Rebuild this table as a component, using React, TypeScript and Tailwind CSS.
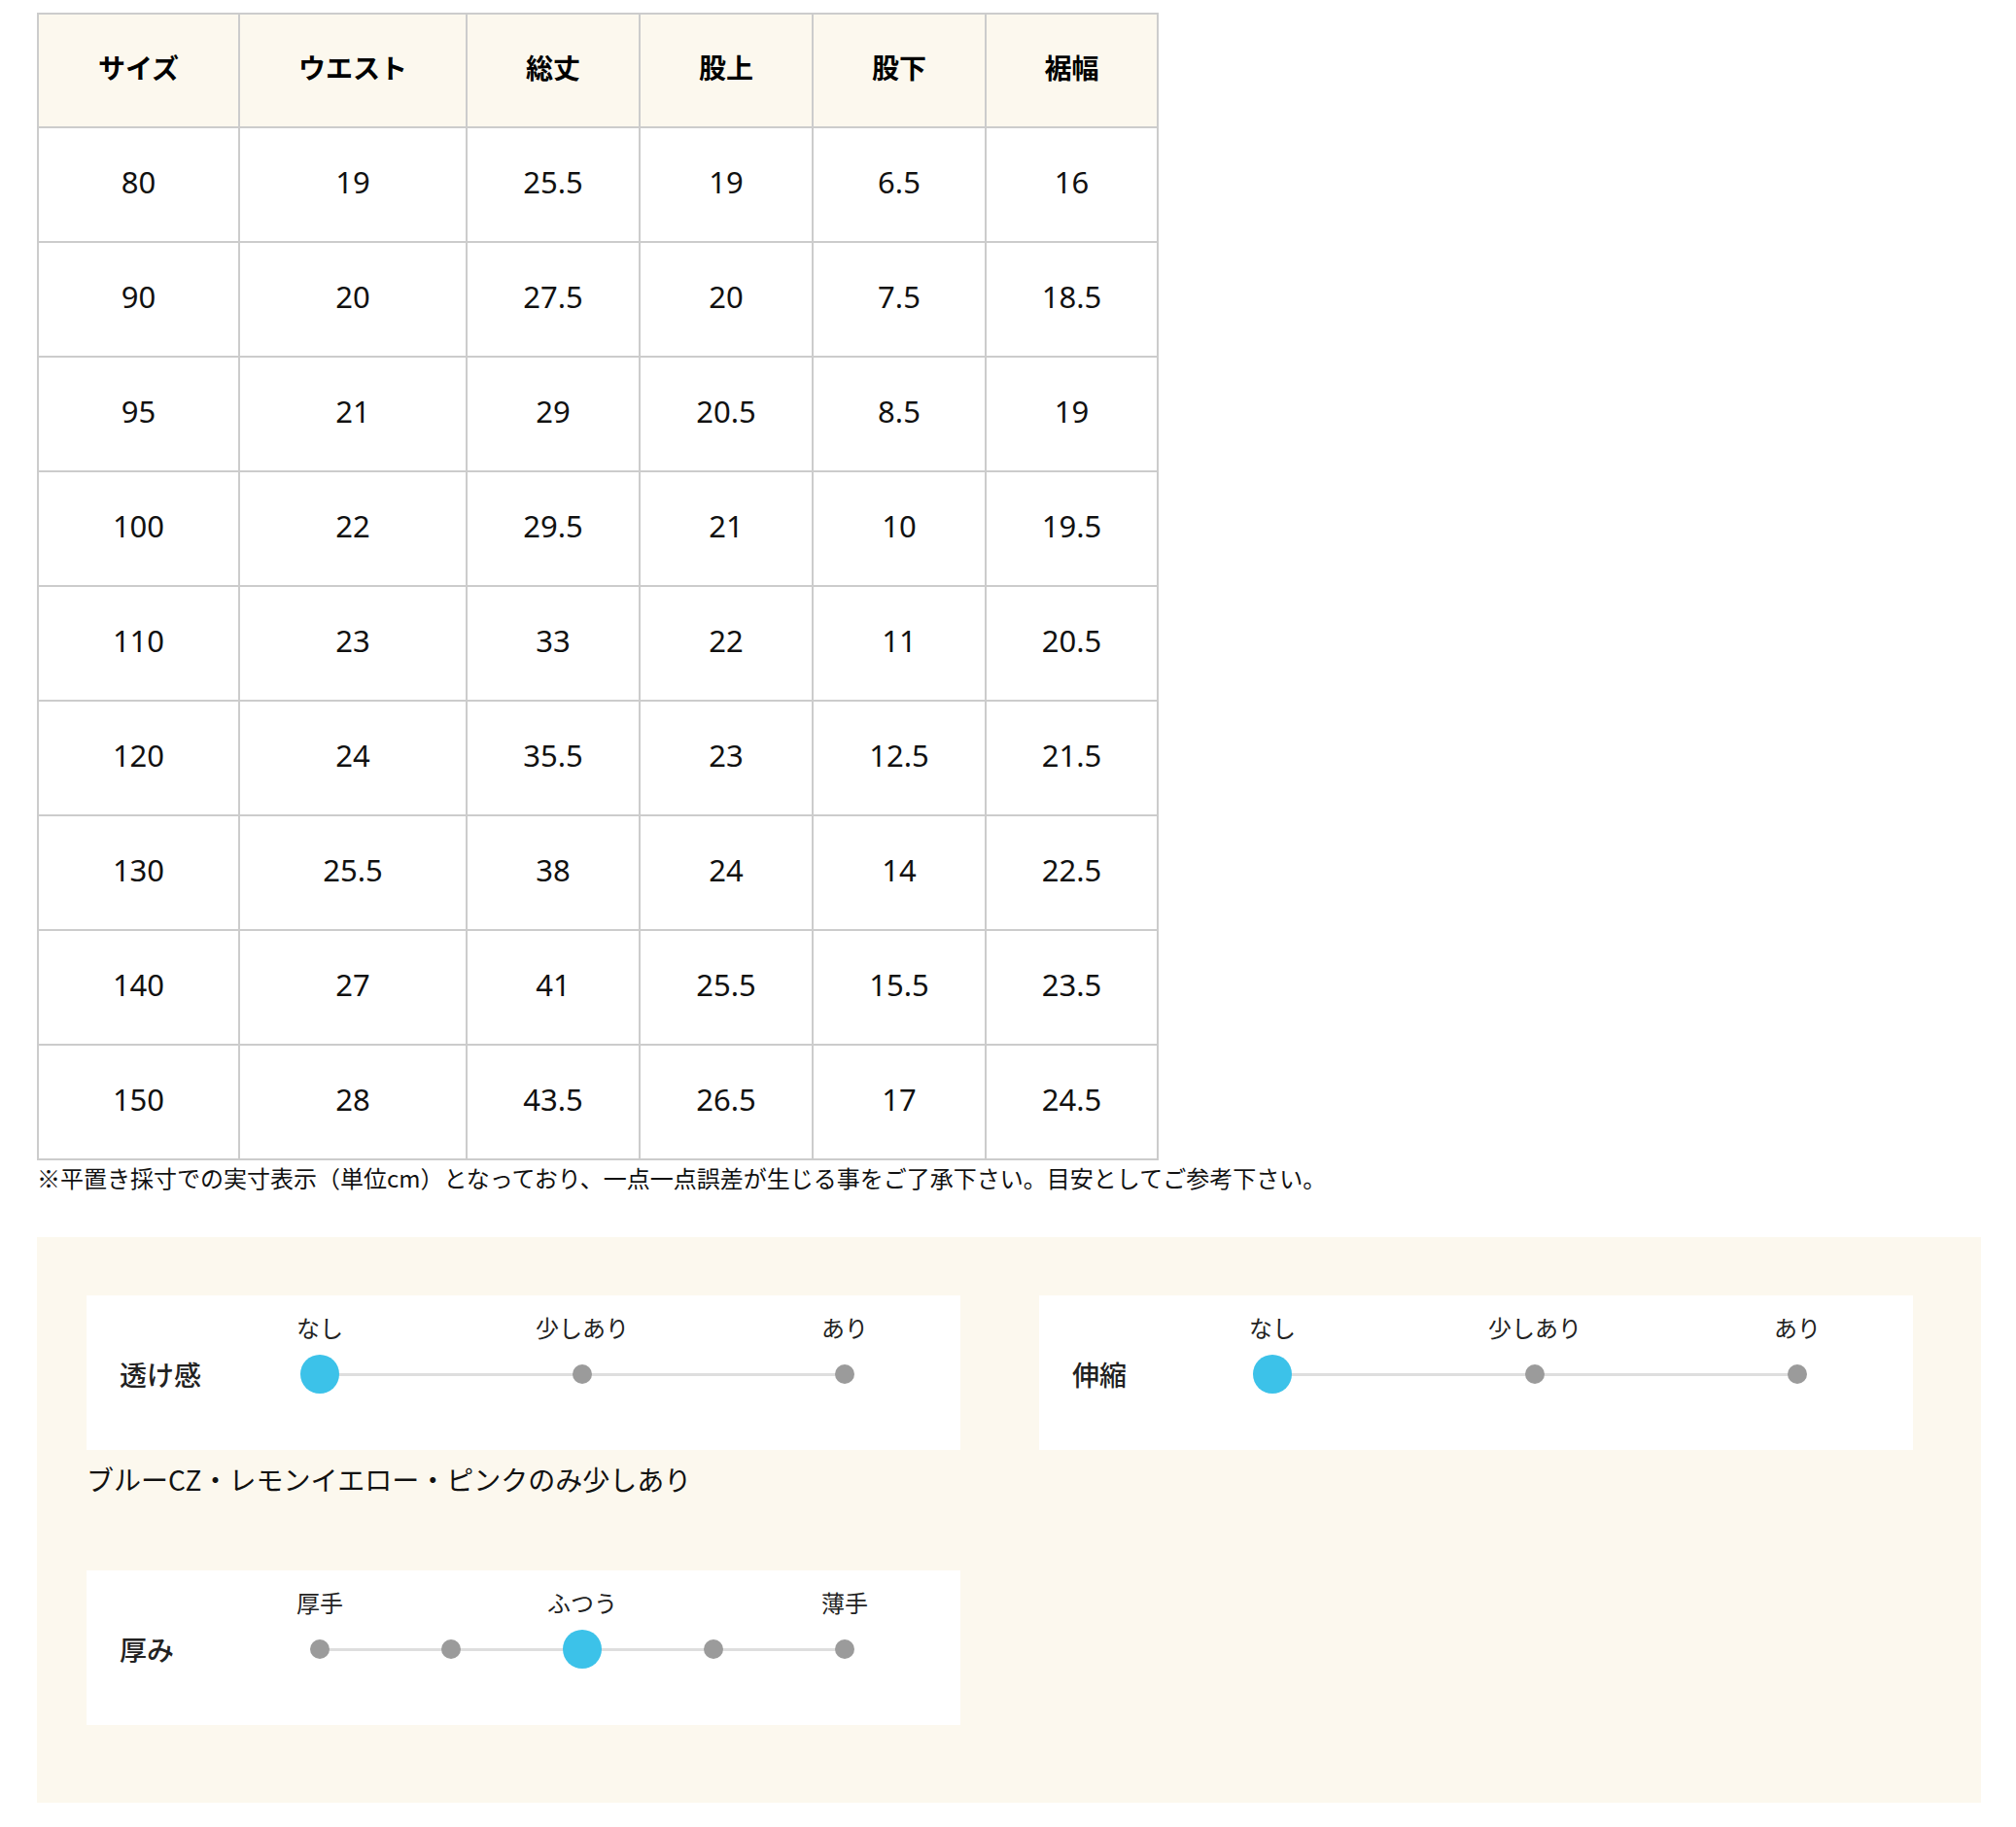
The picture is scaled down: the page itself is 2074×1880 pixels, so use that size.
import React from "react";

const headers = ["サイズ", "ウエスト", "総丈", "股上", "股下", "裾幅"];
const rows = [
  ["80", "19", "25.5", "19", "6.5", "16"],
  ["90", "20", "27.5", "20", "7.5", "18.5"],
  ["95", "21", "29", "20.5", "8.5", "19"],
  ["100", "22", "29.5", "21", "10", "19.5"],
  ["110", "23", "33", "22", "11", "20.5"],
  ["120", "24", "35.5", "23", "12.5", "21.5"],
  ["130", "25.5", "38", "24", "14", "22.5"],
  ["140", "27", "41", "25.5", "15.5", "23.5"],
  ["150", "28", "43.5", "26.5", "17", "24.5"],
];
const widths = ["w-[207px]", "w-[234px]", "w-[178px]", "w-[178px]", "w-[178px]", "w-[177px]"];

const jp = "font-['Noto_Sans_CJK_JP','Noto_Sans',sans-serif]";
const num = "font-['Noto_Sans','Noto_Sans_CJK_JP',sans-serif]";

function Scale({
  label,
  ticks,
  dots,
  active,
}: {
  label: string;
  ticks: string[];
  dots: number;
  active: number;
}) {
  return (
    <div className="w-[899px] h-[159px] bg-white pt-[18px]">
      <div className="pl-[220px]">
        <div className="w-[580px] h-[30px] flex justify-between">
          {ticks.map((t) => (
            <div key={t} className="w-[40px] flex justify-center">
              <span className={`${jp} whitespace-nowrap text-[24px] leading-[30px] text-[#222]`}>{t}</span>
            </div>
          ))}
        </div>
      </div>
      <div className="mt-[13px] flex items-center h-[40px]">
        <div className={`${jp} w-[220px] pl-[34px] text-[28px] font-medium text-[#222] leading-[40px]`}>{label}</div>
        <div className="relative w-[580px] h-[40px] flex justify-between items-center">
          <div className="absolute left-[20px] right-[20px] top-[19px] h-[3px] bg-[#dedede]" />
          {Array.from({ length: dots }).map((_, i) => (
            <div key={i} className="relative w-[40px] h-[40px] flex items-center justify-center">
              {i === active ? (
                <div className="w-[40px] h-[40px] rounded-full bg-[#3cc2e9]" />
              ) : (
                <div className="w-[20px] h-[20px] rounded-full bg-[#9b9b9b]" />
              )}
            </div>
          ))}
        </div>
      </div>
    </div>
  );
}

export default function App() {
  return (
    <div className="bg-white w-[2074px] min-h-[1880px] pl-[38px] pt-[13px]">
      <table className="table-fixed border-collapse w-[1152px]">
        <colgroup>
          {widths.map((w, i) => (
            <col key={i} className={w} />
          ))}
        </colgroup>
        <thead>
          <tr className="h-[117px] bg-[#fcf8ee]">
            {headers.map((h) => (
              <th
                key={h}
                className={`${jp} border-2 border-[#cccccc] pb-[8px] text-[28px] font-bold text-black text-center align-middle`}
              >
                {h}
              </th>
            ))}
          </tr>
        </thead>
        <tbody>
          {rows.map((r, ri) => (
            <tr key={ri} className="h-[118px]">
              {r.map((c, ci) => (
                <td
                  key={ci}
                  className={`${num} border-2 border-[#cccccc] pb-[6px] text-[31px] text-[#111] text-center align-middle`}
                >
                  {c}
                </td>
              ))}
            </tr>
          ))}
        </tbody>
      </table>
      <p className={`${jp} mt-[3px] text-[24px] leading-[30px] text-[#111]`}>
        ※平置き採寸での実寸表示（単位cm）となっており、一点一点誤差が生じる事をご了承下さい。目安としてご参考下さい。
      </p>
      <div className="mt-[46px] w-[2000px] bg-[#fcf8ee] pl-[51px] pt-[60px] pb-[80px]">
        <div className="flex gap-[81px] items-start">
          <div className="flex flex-col">
            <Scale label="透け感" ticks={["なし", "少しあり", "あり"]} dots={3} active={0} />
            <p className={`${jp} mt-[13px] text-[28px] leading-[34px] text-[#111]`}>
              ブルーCZ・レモンイエロー・ピンクのみ少しあり
            </p>
          </div>
          <Scale label="伸縮" ticks={["なし", "少しあり", "あり"]} dots={3} active={0} />
        </div>
        <div className="mt-[77px]">
          <Scale label="厚み" ticks={["厚手", "ふつう", "薄手"]} dots={5} active={2} />
        </div>
      </div>
    </div>
  );
}
